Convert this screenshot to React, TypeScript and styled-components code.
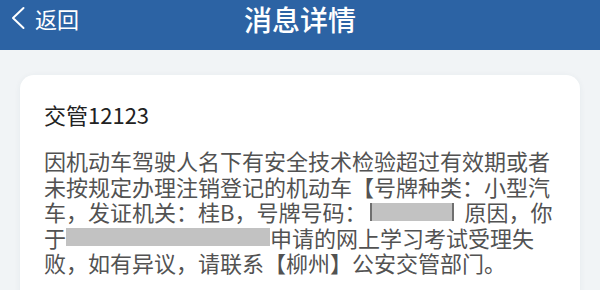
import React from "react";
import styled, { createGlobalStyle } from "styled-components";

const GlobalStyle = createGlobalStyle`
  html, body {
    margin: 0;
    padding: 0;
    background: #f1f4f6;
    font-family: "Noto Sans CJK SC", "Noto Sans", sans-serif;
  }
  #root {
    width: 600px;
    height: 290px;
    overflow: hidden;
  }
`;

const Page = styled.div`
  display: flex;
  flex-direction: column;
  width: 600px;
  height: 290px;
  background: #f1f4f6;
`;

const NavBar = styled.header`
  position: relative;
  display: flex;
  align-items: flex-start;
  justify-content: center;
  height: 50px;
  padding-top: 1px;
  box-sizing: border-box;
  background: #2c63a4;
  color: #fff;
  flex-shrink: 0;
`;

const BackButton = styled.div`
  position: absolute;
  left: 10px;
  top: 2px;
  display: flex;
  align-items: center;
  gap: 9px;
  font-size: 22px;
  line-height: 32px;
`;

const NavTitle = styled.h1`
  margin: 0;
  font-size: 28px;
  font-weight: 500;
  line-height: 36px;
`;

const Body = styled.main`
  padding: 25px 20px 0;
`;

const Card = styled.section`
  background: #fff;
  border-radius: 14px;
  box-shadow: 0 1px 6px rgba(40, 60, 90, 0.06);
  padding: 25px 24px 24px;
  height: 260px;
`;

const Sender = styled.div`
  font-size: 22px;
  line-height: 28px;
  color: #222;
  margin-bottom: 20px;
`;

const Message = styled.div`
  font-size: 22px;
  line-height: 25.5px;
  color: #525252;
`;

const Line = styled.div`
  display: flex;
  align-items: center;
  white-space: nowrap;
`;

const Masked = styled.span<{ $w: number; $bars?: boolean }>`
  display: inline-block;
  width: ${(p) => p.$w}px;
  height: 18px;
  background: #c2c2c2;
  ${(p) =>
    p.$bars
      ? `border-left: 2px solid #6f6f6f; border-right: 2px solid #6f6f6f; margin: 0 10px 0 4px;`
      : ``}
`;

const ChevronLeft = () => (
  <svg width="16" height="24" viewBox="0 0 16 24" fill="none">
    <path
      d="M13.5 2 L3 12 L13.5 22"
      stroke="#fff"
      strokeWidth="2"
      strokeLinecap="round"
      strokeLinejoin="round"
    />
  </svg>
);

export default function App() {
  return (
    <>
      <GlobalStyle />
      <Page>
        <NavBar>
          <BackButton>
            <ChevronLeft />
            <span>返回</span>
          </BackButton>
          <NavTitle>消息详情</NavTitle>
        </NavBar>
        <Body>
          <Card>
            <Sender>交管12123</Sender>
            <Message>
              <Line>因机动车驾驶人名下有安全技术检验超过有效期或者</Line>
              <Line>未按规定办理注销登记的机动车【号牌种类：小型汽</Line>
              <Line>
                车，发证机关：桂B，号牌号码：
                <Masked $w={80} $bars />
                原因，你
              </Line>
              <Line>
                于<Masked $w={204} />申请的网上学习考试受理失
              </Line>
              <Line>败，如有异议，请联系【柳州】公安交管部门。</Line>
            </Message>
          </Card>
        </Body>
      </Page>
    </>
  );
}
